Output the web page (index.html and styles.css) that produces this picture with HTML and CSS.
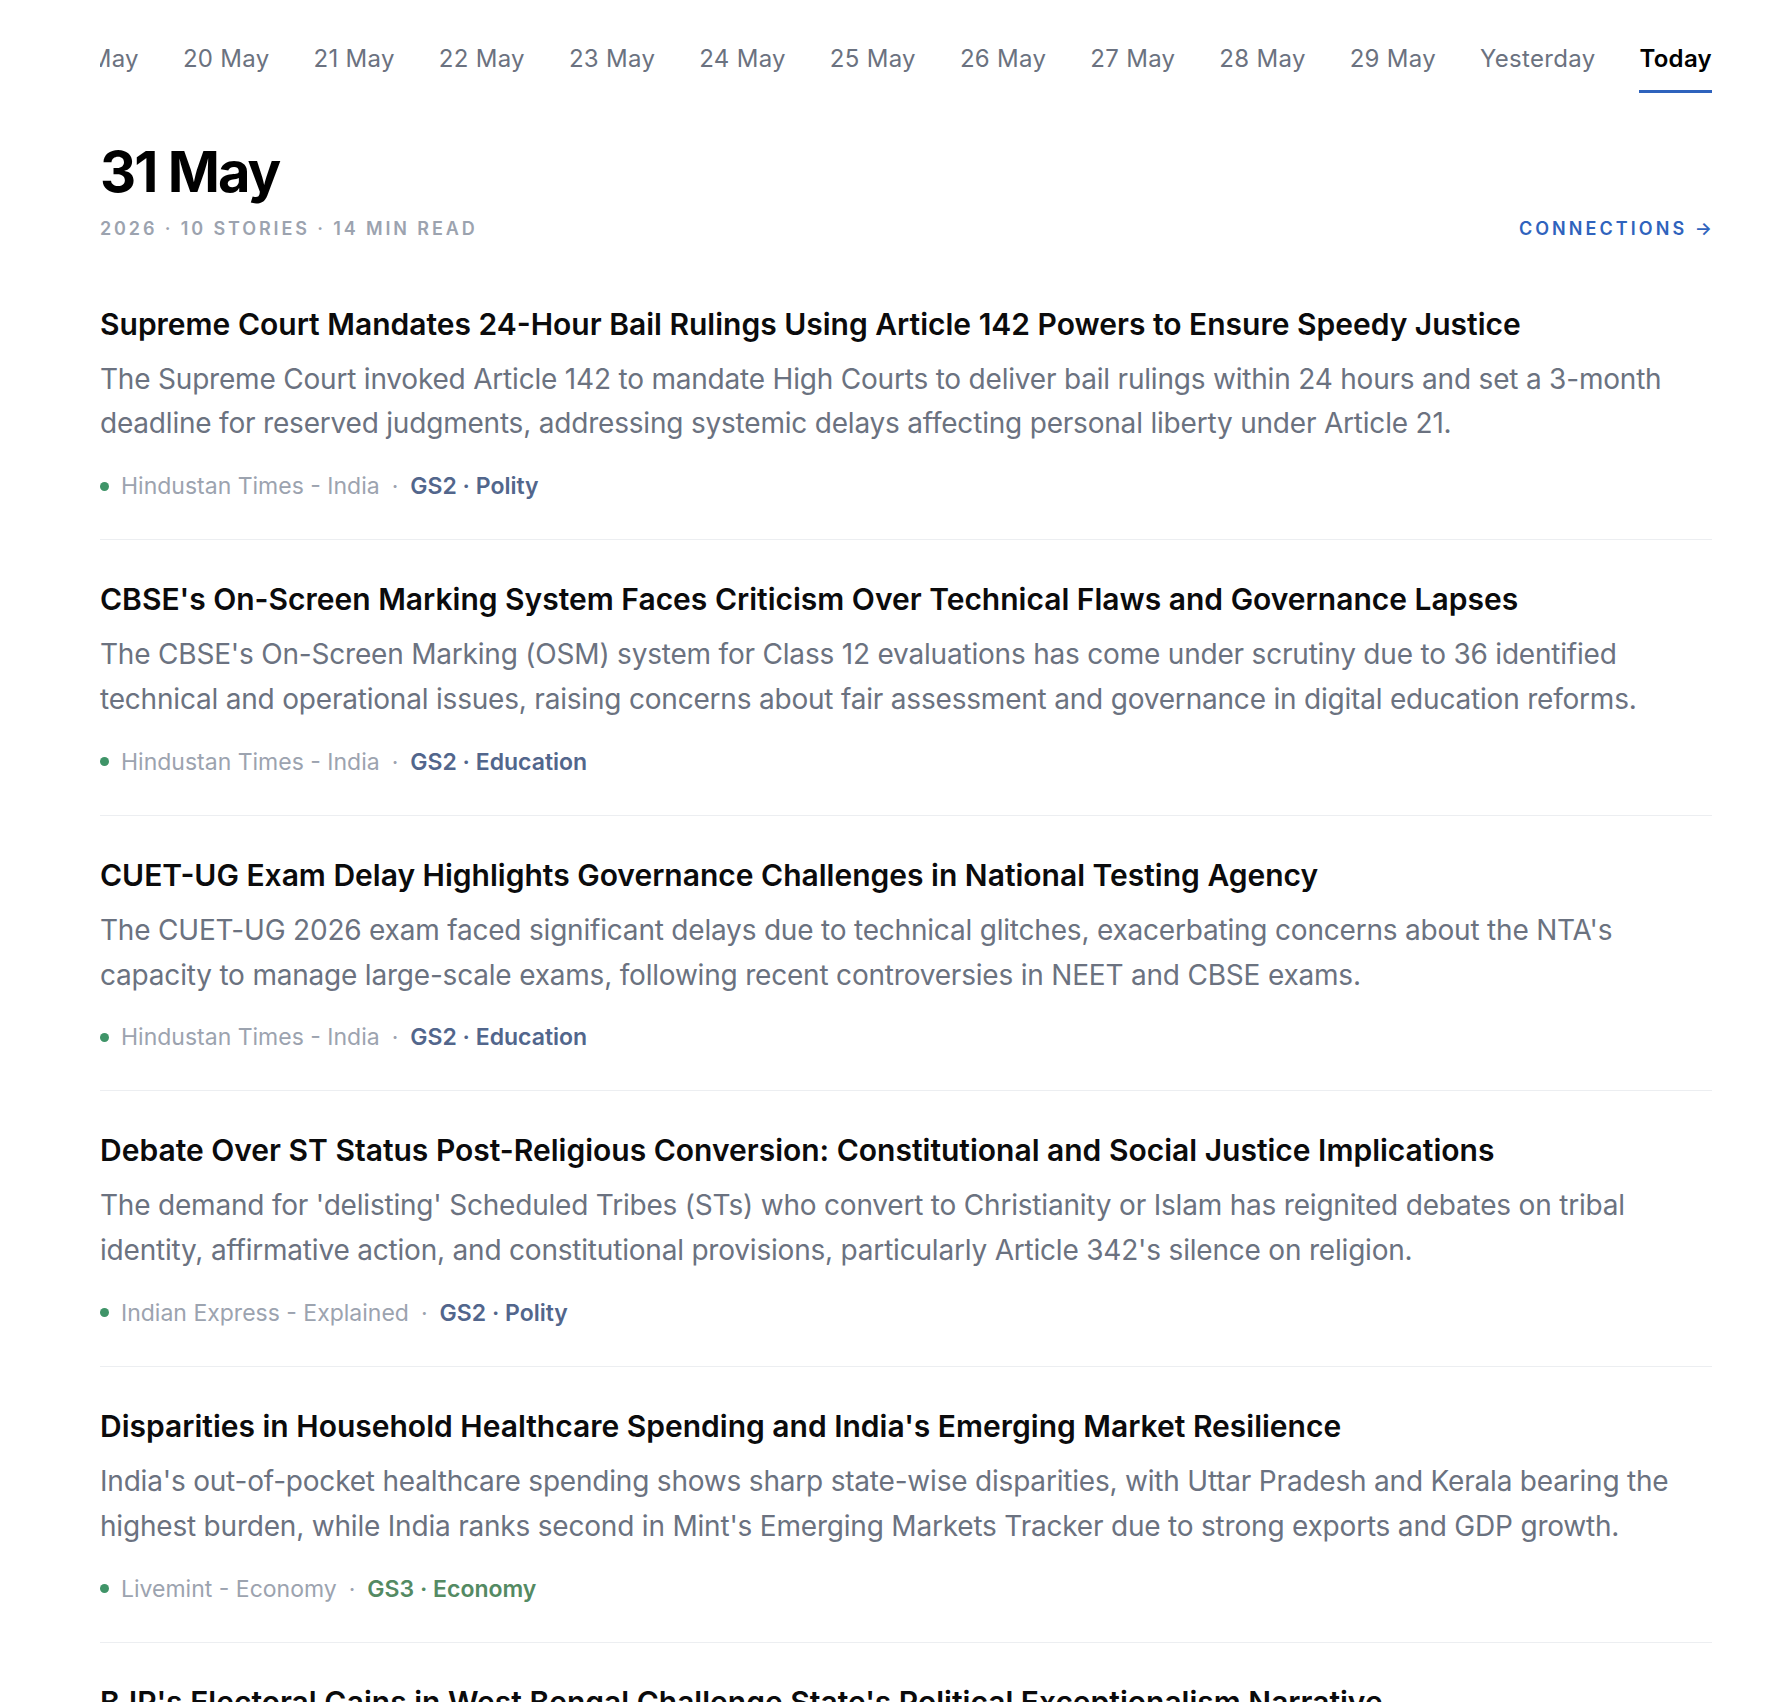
FILE: index.html
```html
<!DOCTYPE html>
<html lang="en">
<head>
    <meta charset="UTF-8">
    <meta name="viewport" content="width=device-width, initial-scale=1.0">
    <title>Daily Digest - 31 May</title>
    <link rel="stylesheet" href="styles.css">
</head>
<body>
    <div class="page">
        <nav class="date-strip">
            <a class="date-tab">19 May</a>
            <a class="date-tab">20 May</a>
            <a class="date-tab">21 May</a>
            <a class="date-tab">22 May</a>
            <a class="date-tab">23 May</a>
            <a class="date-tab">24 May</a>
            <a class="date-tab">25 May</a>
            <a class="date-tab">26 May</a>
            <a class="date-tab">27 May</a>
            <a class="date-tab">28 May</a>
            <a class="date-tab">29 May</a>
            <a class="date-tab">Yesterday</a>
            <a class="date-tab active">Today</a>
        </nav>

        <header class="day-header">
            <h1>31 May</h1>
            <div class="day-meta">
                <span>2026 · 10 stories · 14 min read</span>
                <a class="connections-link" href="#">Connections <span class="arrow">→</span></a>
            </div>
        </header>

        <main class="story-list">
            <article class="story">
                <h2>Supreme Court Mandates 24-Hour Bail Rulings Using Article 142 Powers to Ensure Speedy Justice</h2>
                <p>The Supreme Court invoked Article 142 to mandate High Courts to deliver bail rulings within 24 hours and set a 3-month deadline for reserved judgments, addressing systemic delays affecting personal liberty under Article 21.</p>
                <div class="story-meta">
                    <span class="dot"></span>
                    <span class="source">Hindustan Times - India</span>
                    <span class="sep">·</span>
                    <span class="tag gs2">GS2 · Polity</span>
                </div>
            </article>

            <article class="story">
                <h2>CBSE's On-Screen Marking System Faces Criticism Over Technical Flaws and Governance Lapses</h2>
                <p>The CBSE's On-Screen Marking (OSM) system for Class 12 evaluations has come under scrutiny due to 36 identified technical and operational issues, raising concerns about fair assessment and governance in digital education reforms.</p>
                <div class="story-meta">
                    <span class="dot"></span>
                    <span class="source">Hindustan Times - India</span>
                    <span class="sep">·</span>
                    <span class="tag gs2">GS2 · Education</span>
                </div>
            </article>

            <article class="story">
                <h2>CUET-UG Exam Delay Highlights Governance Challenges in National Testing Agency</h2>
                <p>The CUET-UG 2026 exam faced significant delays due to technical glitches, exacerbating concerns about the NTA's capacity to manage large-scale exams, following recent controversies in NEET and CBSE exams.</p>
                <div class="story-meta">
                    <span class="dot"></span>
                    <span class="source">Hindustan Times - India</span>
                    <span class="sep">·</span>
                    <span class="tag gs2">GS2 · Education</span>
                </div>
            </article>

            <article class="story">
                <h2>Debate Over ST Status Post-Religious Conversion: Constitutional and Social Justice Implications</h2>
                <p>The demand for 'delisting' Scheduled Tribes (STs) who convert to Christianity or Islam has reignited debates on tribal identity, affirmative action, and constitutional provisions, particularly Article 342's silence on religion.</p>
                <div class="story-meta">
                    <span class="dot"></span>
                    <span class="source">Indian Express - Explained</span>
                    <span class="sep">·</span>
                    <span class="tag gs2">GS2 · Polity</span>
                </div>
            </article>

            <article class="story">
                <h2>Disparities in Household Healthcare Spending and India's Emerging Market Resilience</h2>
                <p>India's out-of-pocket healthcare spending shows sharp state-wise disparities, with Uttar Pradesh and Kerala bearing the highest burden, while India ranks second in Mint's Emerging Markets Tracker due to strong exports and GDP growth.</p>
                <div class="story-meta">
                    <span class="dot"></span>
                    <span class="source">Livemint - Economy</span>
                    <span class="sep">·</span>
                    <span class="tag gs3">GS3 · Economy</span>
                </div>
            </article>

            <article class="story">
                <h2>BJP's Electoral Gains in West Bengal Challenge State's Political Exceptionalism Narrative</h2>
                <p>Recent poll results in West Bengal point to a shift in voter alignment, questioning the long-held view of the state as an exception to national political trends.</p>
                <div class="story-meta">
                    <span class="dot"></span>
                    <span class="source">Indian Express - Explained</span>
                    <span class="sep">·</span>
                    <span class="tag gs2">GS2 · Polity</span>
                </div>
            </article>
        </main>
    </div>
</body>
</html>
```

FILE: styles.css
```css
body {
    font-family: 'Inter', 'Noto Sans', sans-serif;
    background: #ffffff;
    color: #111111;
    margin: 0;
    padding: 0;
}
.page {
    width: 1612px;
    margin-left: 100px;
}

/* date strip: scrolled to the newest day, older days clip off the left */
.date-strip {
    display: flex;
    justify-content: flex-end;
    gap: 44px;
    overflow: hidden;
    padding-top: 43px;
}
.date-tab {
    flex-shrink: 0;
    font-size: 24px;
    line-height: 32px;
    letter-spacing: 0.3px;
    color: #6b7280;
    padding-bottom: 15px;
    border-bottom: 3px solid transparent;
    cursor: pointer;
}
.date-tab.active {
    color: #000000;
    font-weight: 600;
    border-bottom-color: #2f63bd;
}

.day-header {
    margin-top: 49px;
}
h1 {
    margin: 0;
    font-size: 56px;
    line-height: 1.1;
    font-weight: 700;
    letter-spacing: -0.035em;
    color: #000000;
}
.day-meta {
    display: flex;
    justify-content: space-between;
    align-items: center;
    margin-top: 13px;
    font-size: 18px;
    line-height: 24px;
    font-weight: 600;
    text-transform: uppercase;
    letter-spacing: 0.16em;
    color: #9ca3af;
}
.connections-link {
    color: #2f63bd;
    text-decoration: none;
    letter-spacing: 0.17em;
}
.connections-link .arrow {
    letter-spacing: 0;
}

.story-list {
    margin-top: 64px;
}
.story {
    padding: 40px 0 38px;
    border-bottom: 1px solid #eceef1;
}
.story:first-child {
    padding-top: 0;
}
.story h2 {
    margin: 0;
    font-size: 30px;
    line-height: 39px;
    font-weight: 600;
    letter-spacing: 0;
    color: #0b0b0c;
}
.story p {
    margin: 13px 0 0;
    font-size: 28px;
    line-height: 44.8px;
    letter-spacing: -0.2px;
    color: #6b7280;
}
.story-meta {
    display: flex;
    align-items: center;
    margin-top: 25px;
    font-size: 23px;
    line-height: 30px;
}
.dot {
    width: 9px;
    height: 9px;
    border-radius: 50%;
    background: #3f9468;
    margin-right: 12px;
}
.source {
    color: #9ca3af;
}
.sep {
    color: #9ca3af;
    margin: 0 12px;
}
.tag {
    font-weight: 600;
}
.tag.gs2 {
    color: #52668c;
}
.tag.gs3 {
    color: #548a63;
}
```
